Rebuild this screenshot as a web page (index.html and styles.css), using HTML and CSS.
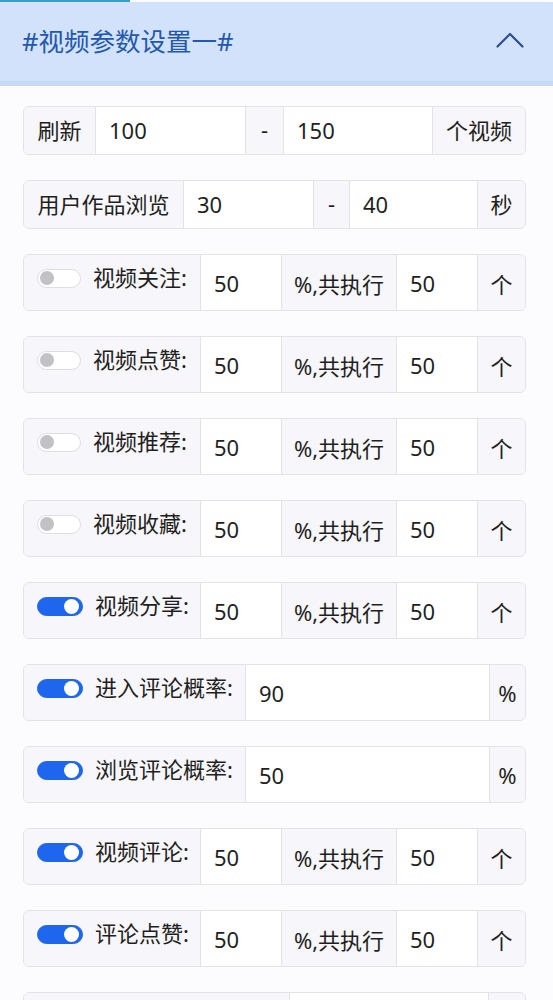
FILE: index.html
```html
<!DOCTYPE html>
<html lang="zh-CN">
<head>
    <meta charset="UTF-8">
    <meta name="viewport" content="width=device-width, initial-scale=1.0">
    <title>视频参数设置</title>
    <link rel="stylesheet" href="styles.css">
</head>
<body>

    <!-- loading bar -->
    <div class="progress"></div>

    <!-- Panel header -->
    <div class="panel-head">
        <h1>#视频参数设置一#</h1>
        <svg class="chevron" width="28" height="16" viewBox="0 0 28 16">
            <polyline points="1.5,14.5 14,2 26.5,14.5" fill="none" stroke="#2b4f8f" stroke-width="2.2" stroke-linecap="round" stroke-linejoin="round"/>
        </svg>
    </div>

    <div class="settings">

        <div class="group range-a">
            <span class="cell label">刷新</span>
            <input class="cell" type="text" value="100">
            <span class="cell label">-</span>
            <input class="cell" type="text" value="150">
            <span class="cell label">个视频</span>
        </div>

        <div class="group range-b">
            <span class="cell label">用户作品浏览</span>
            <input class="cell" type="text" value="30">
            <span class="cell label">-</span>
            <input class="cell" type="text" value="40">
            <span class="cell label">秒</span>
        </div>

        <div class="group count">
            <label class="cell label toggle-cell"><span class="switch"></span><span class="name">视频关注:</span></label>
            <input class="cell" type="text" value="50">
            <span class="cell label">%,共执行</span>
            <input class="cell" type="text" value="50">
            <span class="cell label">个</span>
        </div>

        <div class="group count">
            <label class="cell label toggle-cell"><span class="switch"></span><span class="name">视频点赞:</span></label>
            <input class="cell" type="text" value="50">
            <span class="cell label">%,共执行</span>
            <input class="cell" type="text" value="50">
            <span class="cell label">个</span>
        </div>

        <div class="group count">
            <label class="cell label toggle-cell"><span class="switch"></span><span class="name">视频推荐:</span></label>
            <input class="cell" type="text" value="50">
            <span class="cell label">%,共执行</span>
            <input class="cell" type="text" value="50">
            <span class="cell label">个</span>
        </div>

        <div class="group count">
            <label class="cell label toggle-cell"><span class="switch"></span><span class="name">视频收藏:</span></label>
            <input class="cell" type="text" value="50">
            <span class="cell label">%,共执行</span>
            <input class="cell" type="text" value="50">
            <span class="cell label">个</span>
        </div>

        <div class="group count">
            <label class="cell label toggle-cell"><span class="switch on"></span><span class="name">视频分享:</span></label>
            <input class="cell" type="text" value="50">
            <span class="cell label">%,共执行</span>
            <input class="cell" type="text" value="50">
            <span class="cell label">个</span>
        </div>

        <div class="group prob">
            <label class="cell label toggle-cell"><span class="switch on"></span><span class="name">进入评论概率:</span></label>
            <input class="cell" type="text" value="90">
            <span class="cell label">%</span>
        </div>

        <div class="group prob">
            <label class="cell label toggle-cell"><span class="switch on"></span><span class="name">浏览评论概率:</span></label>
            <input class="cell" type="text" value="50">
            <span class="cell label">%</span>
        </div>

        <div class="group count">
            <label class="cell label toggle-cell"><span class="switch on"></span><span class="name">视频评论:</span></label>
            <input class="cell" type="text" value="50">
            <span class="cell label">%,共执行</span>
            <input class="cell" type="text" value="50">
            <span class="cell label">个</span>
        </div>

        <div class="group count">
            <label class="cell label toggle-cell"><span class="switch on"></span><span class="name">评论点赞:</span></label>
            <input class="cell" type="text" value="50">
            <span class="cell label">%,共执行</span>
            <input class="cell" type="text" value="50">
            <span class="cell label">个</span>
        </div>

        <!-- next row, only its top edge is in view -->
        <div class="group wide">
            <span class="cell label"></span>
            <span class="cell blank"></span>
            <span class="cell label"></span>
        </div>

    </div>

</body>
</html>
```

FILE: styles.css
```css
* {
    box-sizing: border-box;
}

body {
    margin: 0;
    background-color: #fcfbfe;
    font-family: "Noto Sans", "Noto Sans CJK SC", sans-serif;
    color: #1f1f22;
}

.progress {
    width: 130px;
    height: 2px;
    background-color: #3a9fc8; /* teal loading line */
}

.panel-head {
    display: flex;
    align-items: center;
    justify-content: space-between;
    height: 84px;
    padding: 0 29px 5px 22px;
    background-color: #d2e2fb;
    border-bottom: 5px solid #c6daf7;
}

.panel-head h1 {
    margin: 0;
    font-size: 25.5px;
    font-weight: 400;
    color: #2258ad;
}

.chevron {
    display: block;
    margin-top: 2px;
}

.settings {
    display: flex;
    flex-direction: column;
    gap: 25px;
    width: 503px;
    margin: 20px 0 0 23px;
}

.group {
    display: grid;
    height: 49px;
    border: 1px solid #e3e2e7;
    border-radius: 6px;
    overflow: hidden;
    background-color: #f7f6fa;
}

.range-a { grid-template-columns: 71px 150px 38px 149px 1fr; }
.range-b { grid-template-columns: 159px 130px 36px 128px 1fr; }
.count   { grid-template-columns: 176px 81px 115px 81px 1fr; height: 57px; }
.prob    { grid-template-columns: 221px 244px 1fr; height: 57px; }
.wide    { grid-template-columns: 265px 199px 1fr; height: 57px; }

.cell {
    display: flex;
    align-items: center;
    height: 100%;
    min-width: 0;
    margin: 0;
    border: none;
    border-left: 1px solid #e3e2e7;
    font-family: inherit;
    font-size: 22px;
    font-weight: 400;
    color: #1f1f22;
}

.range-a .cell,
.range-b .cell {
    padding-bottom: 3px;
}

.cell:first-child {
    border-left: none;
}

.label {
    justify-content: center;
    background-color: #f7f6fa;
    white-space: nowrap;
}

input.cell,
.blank {
    padding-left: 13px;
    padding-right: 0;
    background-color: #fff;
    outline: none;
}

.toggle-cell {
    justify-content: flex-start;
    padding: 0 0 9px 13px;
    gap: 12px;
}

.toggle-cell .name {
    padding-bottom: 4px;
}

/* switch */
.switch {
    position: relative;
    flex: none;
    width: 44px;
    height: 19px;
    border: 1px solid #dedde2;
    border-radius: 10px;
    background-color: #fff;
}

.switch::after {
    content: "";
    position: absolute;
    top: 1.5px;
    left: 2px;
    width: 14px;
    height: 14px;
    border-radius: 50%;
    background-color: #c2c1c6;
}

.switch.on {
    width: 46px;
    border-color: #1f66ef;
    background-color: #1f66ef;
}

.switch.on::after {
    left: auto;
    right: 3px;
    top: 1px;
    width: 15px;
    height: 15px;
    background-color: #fff;
}
```
